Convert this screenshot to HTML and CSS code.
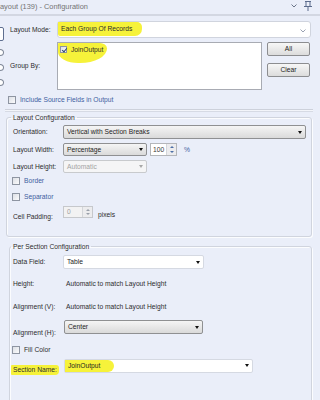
FILE: index.html
```html
<!DOCTYPE html>
<html>
<head>
<meta charset="utf-8">
<link rel="stylesheet" href="styles.css">
</head>
<body>
<div class="titlebar">
  <span class="title">ayout (139) - Configuration</span>
  <span class="tb-icons">
    <svg class="tb-chev" width="6" height="4" viewBox="0 0 6 4"><polyline points="0.5,0.5 3,3 5.5,0.5" fill="none" stroke="#6a7488" stroke-width="1"/></svg>
    <svg class="tb-pin" width="8" height="10" viewBox="0 0 8 10"><path d="M1 0.5h6 M2 0.5v4.5 M6 0.5v4.5 M0 5.5h8 M4 5.5v4.5" fill="none" stroke="#5b6b8c" stroke-width="1"/></svg>
  </span>
</div>

<div class="top">
  <div class="strip">
    <span class="radio sel"></span>
    <span class="radio"></span>
    <span class="radio"></span>
    <span class="radio"></span>
  </div>
  <div class="topform">
    <div class="lbl">Layout Mode:</div>
    <div class="mode-select">
      <span class="hl-mode">Each Group Of Records</span>
      <svg class="chev" width="6" height="4" viewBox="0 0 6 4"><polyline points="0.5,0.5 3,3 5.5,0.5" fill="none" stroke="#9aa2b2" stroke-width="1"/></svg>
    </div>
    <div class="lbl">Group By:</div>
    <div class="listbox">
      <div class="item"><span class="cb checked"></span><span>JoinOutput</span></div>
    </div>
    <div class="btns">
      <div class="btn">All</div>
      <div class="btn">Clear</div>
    </div>
  </div>
</div>

<div class="include"><span class="cb"></span><span class="blue">Include Source Fields in Output</span></div>
<div class="sep"></div>

<fieldset class="group g1">
  <legend>Layout Configuration</legend>
  <div class="inner">
    <div class="row r-orient">
      <span class="lbl2">Orientation:</span>
      <div class="sel grad w-orient"><span>Vertical with Section Breaks</span><span class="arrow"></span></div>
    </div>
    <div class="row r-width">
      <span class="lbl2">Layout Width:</span>
      <div class="sel grad w-small"><span>Percentage</span><span class="arrow"></span></div>
      <div class="spin w-spin"><span class="spin-val">100</span><span class="spin-btns"><span class="up"></span><span class="down"></span></span></div>
      <span class="pct">%</span>
    </div>
    <div class="row r-height">
      <span class="lbl2">Layout Height:</span>
      <div class="sel disabled w-small"><span>Automatic</span><span class="arrow"></span></div>
    </div>
    <div class="row r-border">
      <span class="cb"></span><span class="blue">Border</span>
    </div>
    <div class="row r-separator">
      <span class="cb"></span><span class="blue">Separator</span>
    </div>
    <div class="row r-pad">
      <span class="lbl2 low">Cell Padding:</span>
      <div class="spin spin-dis w-pad"><span class="spin-val">0</span><span class="spin-btns"><span class="up"></span><span class="down"></span></span></div>
      <span class="pixels">pixels</span>
    </div>
  </div>
</fieldset>

<fieldset class="group g2">
  <legend>Per Section Configuration</legend>
  <div class="inner">
    <div class="row r-data">
      <span class="lbl2">Data Field:</span>
      <div class="sel white w-data"><span>Table</span><span class="arrow"></span></div>
    </div>
    <div class="row r-h">
      <span class="lbl2">Height:</span>
      <span class="auto">Automatic to match Layout Height</span>
    </div>
    <div class="row r-av">
      <span class="lbl2">Alignment (V):</span>
      <span class="auto">Automatic to match Layout Height</span>
    </div>
    <div class="row r-ah">
      <span class="lbl2 low">Alignment (H):</span>
      <div class="sel grad w-align"><span>Center</span><span class="arrow"></span></div>
    </div>
    <div class="row r-fill">
      <span class="cb"></span><span class="dark">Fill Color</span>
    </div>
    <div class="row r-name">
      <span class="lbl2"><span class="hl-label">Section Name:</span></span>
      <div class="sel white w-name"><span class="hl-name">JoinOutput</span><span class="arrow"></span></div>
    </div>
  </div>
</fieldset>
</body>
</html>
```

FILE: styles.css
```css
* { box-sizing: border-box; }
html, body { margin: 0; padding: 0; }
body {
  width: 320px;
  height: 400px;
  overflow: hidden;
  background: #eaeef9;
  font-family: "Liberation Sans", Arial, sans-serif;
  font-size: 6.7px;
  color: #2c2c2c;
  line-height: 8px;
}

/* title bar */
.titlebar {
  height: 16px;
  display: flex;
  align-items: flex-start;
  justify-content: space-between;
  border-bottom: 2px solid #d3d7e2;
}
.title {
  font-size: 7.4px;
  color: #737373;
  line-height: 13px;
}
.tb-icons {
  display: flex;
  align-items: flex-start;
  gap: 7px;
  margin-right: 8px;
}
.tb-chev { margin-top: 4px; }
.tb-pin { margin-top: 1px; }

/* top section */
.top { display: flex; height: 74px; }
.strip {
  width: 4px;
  overflow: hidden;
  display: flex;
  flex-direction: column;
  gap: 8px;
  padding-top: 11px;
}
.radio {
  display: block;
  width: 8px;
  height: 7px;
  margin-left: -4px;
  border: 1px solid #7d8696;
  border-radius: 50%;
  background: #fff;
}
.radio.sel { border-color: #5f6f90; border-radius: 2px; }

.topform {
  margin-left: 6px;
  display: grid;
  grid-template-columns: 42px 205px 44px;
  grid-template-rows: 17px 48px;
  column-gap: 5px;
  row-gap: 4px;
  padding-top: 5px;
}
.lbl { align-self: center; color: #2c2c2c; }
.mode-select {
  grid-column: 2 / 4;
  background: #fff;
  border: 1px solid #d0d4de;
  border-radius: 3px;
  display: flex;
  align-items: flex-start;
  justify-content: space-between;
}
.hl-mode {
  display: block;
  height: 14px;
  line-height: 14px;
  padding: 0 10px 0 3px;
  background: #f6f23a;
  border-radius: 0 5px 7px 2px;
}
.chev { margin: 7px 4px 0 0; }

.listbox {
  background: #fff;
  border: 1px solid #a8abb3;
}
.item {
  display: inline-flex;
  align-items: flex-start;
  gap: 4px;
  padding: 3px 4px 10px 2px;
  background: #f6f23a;
  border-radius: 1px 8px 60% 45% / 1px 6px 80% 60%;
  line-height: 7px;
}

.btns {
  display: flex;
  flex-direction: column;
  gap: 7px;
}
.btn {
  width: 43px;
  height: 14px;
  line-height: 12px;
  text-align: center;
  border: 1px solid #8c8d90;
  border-radius: 2px;
  background: linear-gradient(#f7f7f7, #dcdcdc);
  color: #222;
}

/* checkboxes */
.cb {
  display: inline-block;
  flex: none;
  width: 8px;
  height: 8px;
  border: 1px solid #8e95a2;
  background: linear-gradient(135deg, #dde0e6, #fbfbfc);
  position: relative;
}
.item .cb { width: 7px; height: 7px; }
.cb.checked::after {
  content: "";
  position: absolute;
  left: 1.5px;
  top: 0px;
  width: 2px;
  height: 4px;
  border-right: 1px solid #2c4670;
  border-bottom: 1px solid #2c4670;
  transform: rotate(40deg);
}

.include {
  display: flex;
  align-items: center;
  gap: 4px;
  height: 8px;
  margin: 6px 0 0 8px;
}
.blue { color: #41609f; }
.dark { color: #2c2c2c; }

.sep {
  margin: 5px 0 0 5px;
  width: 308px;
  height: 3px;
  border-top: 1px solid #cdd1db;
  border-bottom: 1px solid #d6dae4;
  background: #f3f5fa;
}

/* group boxes */
.group {
  margin: 0;
  padding: 0;
  border: 1px solid #d0d4de;
  border-radius: 3px;
  box-shadow: inset 1px 1px 0 #fbfcfe, 1px 1px 0 #fbfcfe;
  min-width: 0;
}
.group legend {
  padding: 0 2px;
  line-height: 9px;
  color: #2c2c2c;
}
.g1 { margin: 1px 0 0 6px; width: 306px; }
.g1 legend { margin-left: 4px; }
.g1 .inner { padding: 3px 5px 18px 6px; }
.g2 { margin: 5px 0 0 9px; width: 303px; height: 200px; }
.g2 legend { margin-left: 1px; }
.g2 .inner { padding: 4px 5px 0 3px; }

.row { display: flex; align-items: center; }
.lbl2 { width: 50px; flex: none; white-space: nowrap; }
.lbl2.low { align-self: flex-end; margin-bottom: -3px; }

.sel {
  height: 14px;
  display: flex;
  align-items: center;
  justify-content: space-between;
  padding-left: 3px;
  border-radius: 2px;
}
.sel.grad {
  border: 1px solid #8f9092;
  background: linear-gradient(#f5f5f5, #dadada);
  color: #1e1e1e;
}
.sel.disabled {
  border: 1px solid #c8cacd;
  background: #f5f5f6;
  color: #a3a3a3;
}
.sel.disabled .arrow { border-top-color: #a8a8a8; }
.sel.white {
  border: 1px solid #d5d9e2;
  background: #fff;
  color: #1e1e1e;
}
.arrow {
  flex: none;
  width: 0;
  height: 0;
  margin-right: 3px;
  border-left: 2.5px solid transparent;
  border-right: 2.5px solid transparent;
  border-top: 3px solid #111;
}

.r-orient { margin-top: 0; height: 14px; }
.w-orient { width: 243px; }
.r-width { margin-top: 4px; height: 13px; }
.r-width .sel, .r-height .sel { height: 13px; }
.w-small { width: 84px; }
.r-height { margin-top: 4px; height: 13px; }
.r-border { margin-top: 4px; height: 8px; gap: 4px; }
.r-border .cb, .r-separator .cb, .r-fill .cb { margin-left: -1px; }
.r-separator { margin-top: 8px; height: 8px; gap: 4px; }
.r-pad { margin-top: 5px; height: 12px; }

.spin {
  display: flex;
  align-items: stretch;
  justify-content: space-between;
  border: 1px solid #b4b6ba;
  background: #fff;
  height: 13px;
}
.w-spin { width: 27px; margin-left: 3px; }
.spin-val { padding-left: 2px; line-height: 11px; color: #3a3a3a; }
.spin-btns {
  width: 10px;
  display: flex;
  flex-direction: column;
  justify-content: space-evenly;
  align-items: center;
  background: #ececee;
  border-left: 1px solid #d4d6da;
}
.up, .down {
  width: 0; height: 0;
  border-left: 2px solid transparent;
  border-right: 2px solid transparent;
}
.up { border-bottom: 2px solid #4d6fa6; }
.down { border-top: 2px solid #4d6fa6; }
.pct { margin-left: 7px; color: #41609f; }

.spin-dis { height: 12px; background: #f2f2f3; border-color: #c6c8cc; }
.spin-dis .spin-val { color: #a0a0a0; padding-left: 3px; line-height: 10px; }
.spin-dis .up { border-bottom-color: #9aa0aa; }
.spin-dis .down { border-top-color: #9aa0aa; }
.w-pad { width: 30px; }
.pixels { margin-left: 5px; margin-top: 6px; }

.r-data { height: 14px; }
.w-data { width: 141px; }
.r-h { margin-top: 9px; height: 12px; }
.auto { margin-left: 3px; }
.r-av { margin-top: 11px; height: 12px; }
.r-ah { margin-top: 7px; height: 14px; }
.w-align { width: 139px; margin-left: 1px; }
.r-fill { margin-top: 12px; height: 8px; gap: 4px; }
.r-name { margin-top: 5px; height: 13px; }
.r-name .lbl2 { align-self: flex-end; margin-bottom: -3px; }
.hl-label {
  display: inline-block;
  margin-left: -2px;
  padding: 1px 2px 1px 2px;
  background: #f6f23a;
  border-radius: 1px 3px 4px 1px;
}
.w-name { width: 189px; margin-left: 1px; padding-left: 0; align-items: stretch; }
.w-name .arrow { align-self: center; }
.hl-name {
  display: block;
  padding: 0 14px 0 3px;
  line-height: 11px;
  background: #f6f23a;
  border-radius: 0 6px 6px 0;
}
```
